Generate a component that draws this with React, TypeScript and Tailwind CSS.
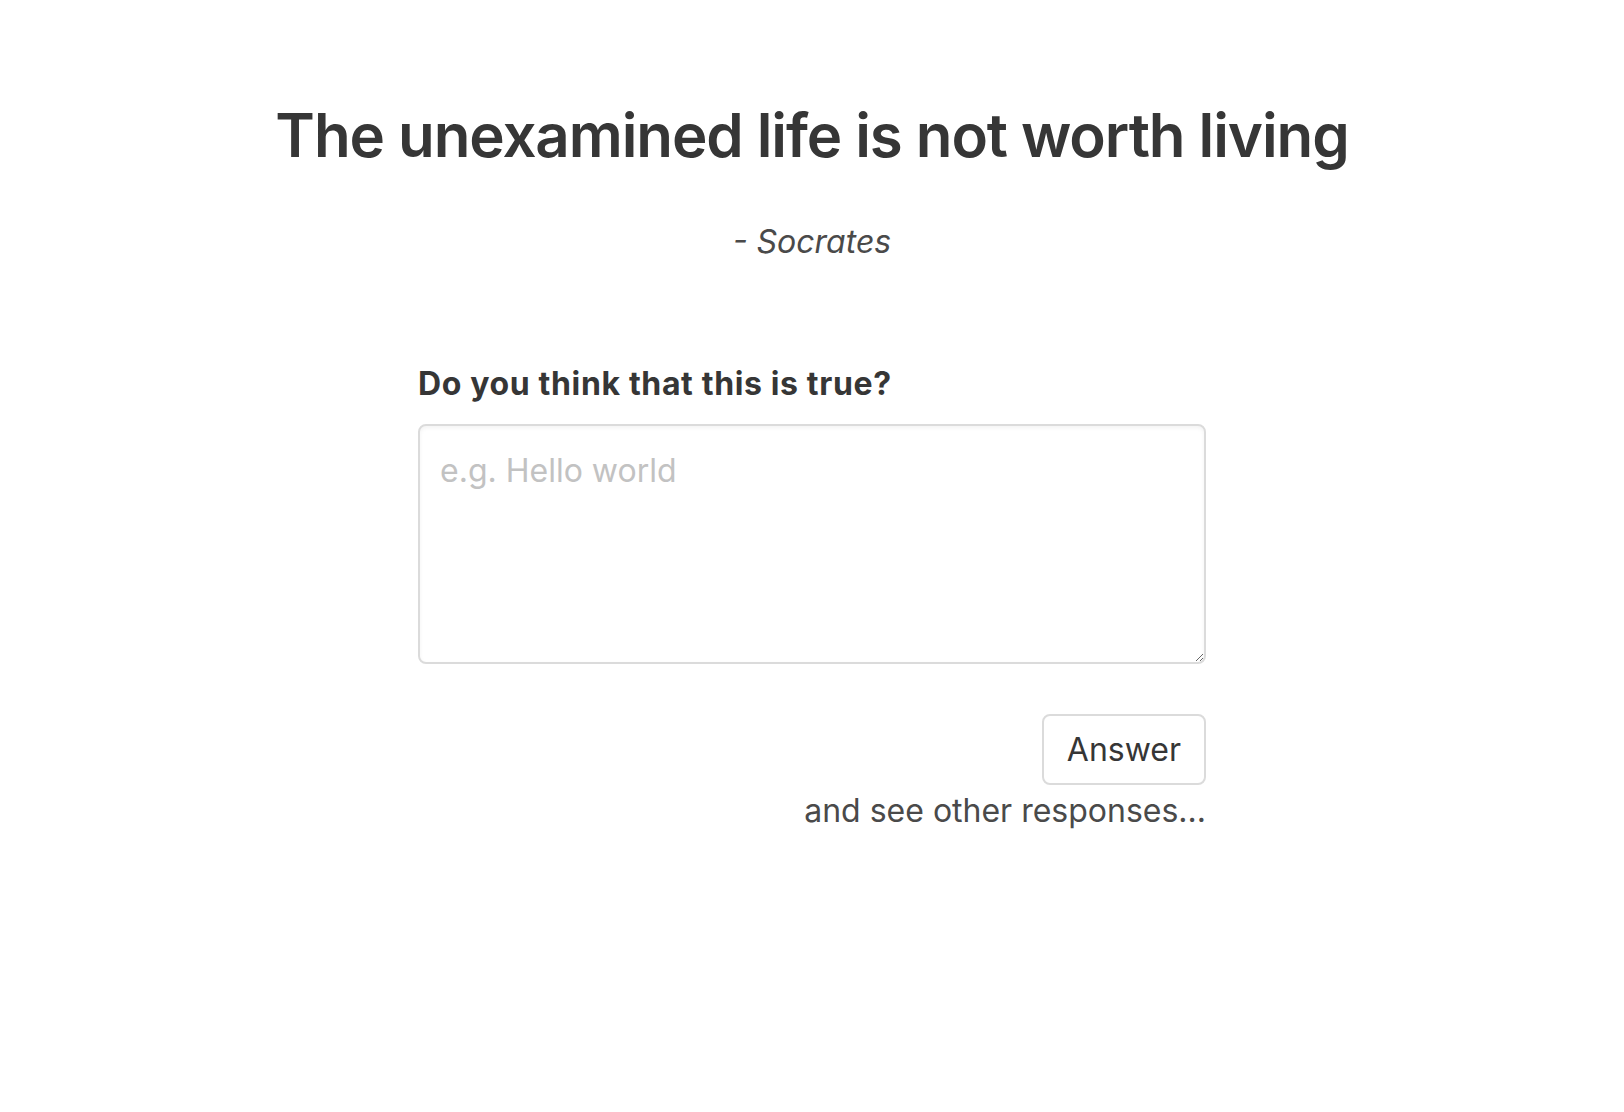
export default function App() {
  return (
    <div className="min-h-screen bg-white text-[#363636]" style={{ fontFamily: 'Inter, "Liberation Sans", sans-serif' }}>
      <div className="flex flex-col items-center pt-[98px]">
        <h1 className="text-[60px] font-semibold leading-[1.25] tracking-[-0.018em]">
          The unexamined life is not worth living
        </h1>
        <p className="mt-[45px] text-[32px] leading-[1.5] italic text-[#4a4a4a]">- Socrates</p>

        <div className="mt-[94px] w-[788px]">
          <label className="block text-[32px] font-bold leading-[1.5] tracking-[0.02em]">Do you think that this is true?</label>
          <textarea
            className="mt-[16px] block h-[240px] w-full rounded-[8px] border-2 border-[#dbdbdb] px-[20px] pt-[21px] pb-[14px] text-[32px] leading-[1.5] text-[#363636] shadow-[inset_0_2px_4px_rgba(10,10,10,0.05)] outline-none placeholder:text-[#c2c2c2]"
            placeholder="e.g. Hello world"
          />
          <div className="mt-[50px] flex justify-end">
            <button className="h-[71px] rounded-[8px] border-2 border-[#dbdbdb] bg-white px-[23px] text-[32px] text-[#363636]">
              Answer
            </button>
          </div>
          <p className="mt-[2px] text-right text-[32px] leading-[1.5] text-[#4a4a4a]">and see other responses...</p>
        </div>
      </div>
    </div>
  );
}
